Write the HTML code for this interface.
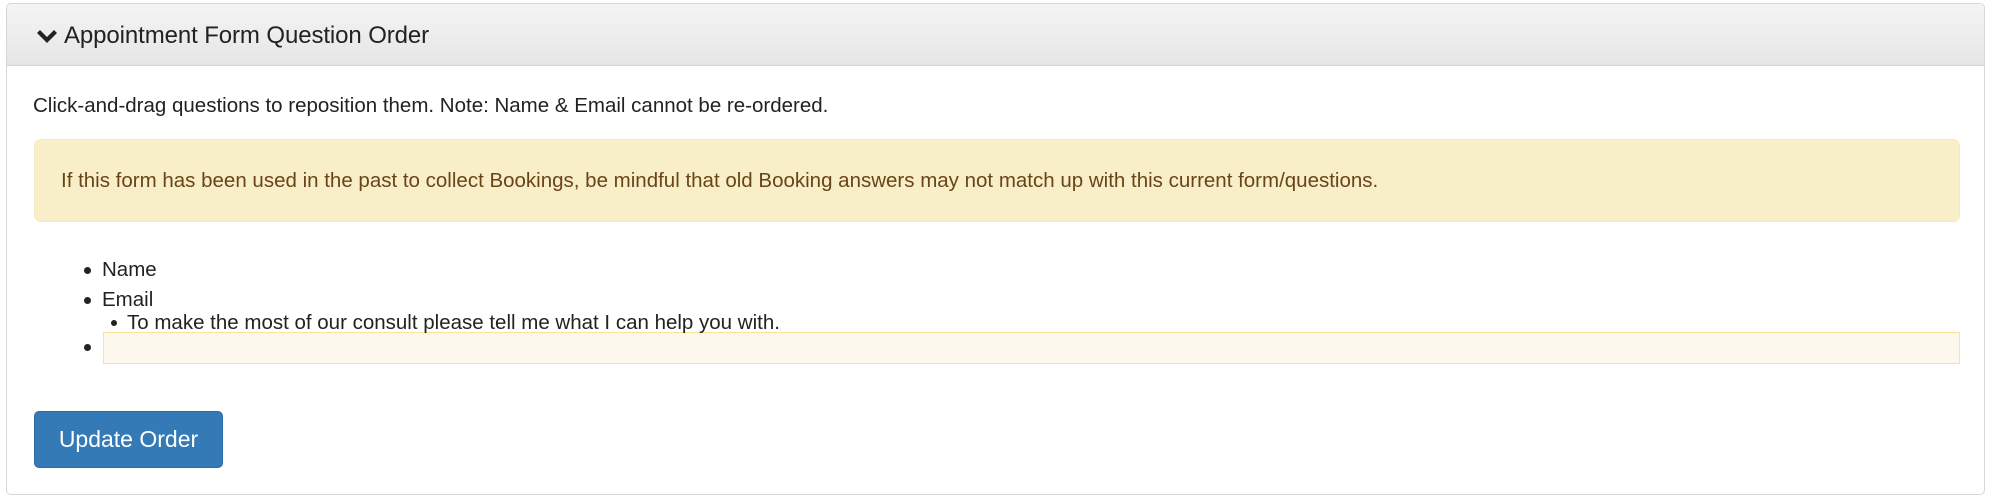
<!DOCTYPE html>
<html><head><meta charset="utf-8"><style>
*{box-sizing:border-box;margin:0;padding:0}
body{width:1990px;height:498px;background:#fff;font-family:"Liberation Sans",Arial,sans-serif;color:#222;position:relative;overflow:hidden}
.panel{position:absolute;left:6px;top:3px;width:1979px;height:492px;border:1px solid #d6d6d6;border-radius:5px;background:#fff}
.head{position:absolute;left:0;top:0;right:0;height:62px;background:linear-gradient(#f4f4f4,#e6e6e6);border-bottom:1px solid #d4d4d4;border-radius:5px 5px 0 0}
.title{position:absolute;left:57px;top:18px;font-size:24px;color:#222;letter-spacing:-0.1px}
.chev{position:absolute;left:29px;top:25px}
.t{position:absolute;font-size:20.5px;white-space:nowrap}
.alert{position:absolute;left:27px;top:135px;width:1926px;height:83px;background:#f8efc8;border:1px solid #f5e8c0;border-radius:7px}
.alert span{position:absolute;left:26px;top:29px;font-size:20.5px;color:#6a4418}
.dot{position:absolute;width:7px;height:7px;border-radius:50%;background:#222}
.ph{position:absolute;left:96px;top:328px;width:1857px;height:32px;background:#fcf8ee;border:1px solid #f7e59a}
.btn{position:absolute;left:27px;top:407px;width:189px;height:57px;background:#337ab7;border:1px solid #2e6da4;border-radius:5px;color:#fff;font-size:23px;text-align:center;line-height:55px}
</style></head><body>
<div class="panel">
<div class="head">
<svg class="chev" width="22" height="14" viewBox="0 0 22 14"><path d="M2.5 2.5 L11 11 L19.5 2.5" fill="none" stroke="#222" stroke-width="4.2" stroke-linejoin="miter"/></svg>
<div class="title">Appointment Form Question Order</div>
</div>
<div class="t" style="left:26px;top:90px">Click-and-drag questions to reposition them. Note: Name &amp; Email cannot be re-ordered.</div>
<div class="alert"><span>If this form has been used in the past to collect Bookings, be mindful that old Booking answers may not match up with this current form/questions.</span></div>
<div class="ph"></div>
<div class="dot" style="left:77px;top:263px"></div>
<div class="t" style="left:95px;top:254px">Name</div>
<div class="dot" style="left:77px;top:293px"></div>
<div class="t" style="left:95px;top:284px">Email</div>
<div class="dot" style="left:104px;top:316px;width:6px;height:6px"></div>
<div class="t" style="left:120px;top:307px">To make the most of our consult please tell me what I can help you with.</div>
<div class="dot" style="left:77px;top:340px"></div>
<div class="btn">Update Order</div>
</div>
</body></html>
